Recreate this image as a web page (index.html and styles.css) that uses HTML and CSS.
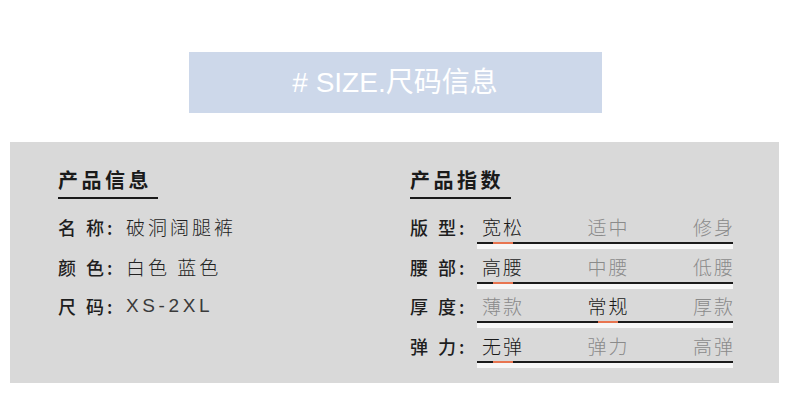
FILE: index.html
```html
<!DOCTYPE html>
<html lang="zh-CN">
<head>
<meta charset="utf-8">
<title>SIZE 尺码信息</title>
<link rel="stylesheet" href="styles.css">
</head>
<body>
<div class="page">
  <div class="banner"># SIZE.尺码信息</div>
  <div class="panel">
    <div class="col col-left">
      <div class="heading">产品信息</div>
      <div class="info-row"><span class="label">名 称:</span><span class="value">破洞阔腿裤</span></div>
      <div class="info-row"><span class="label">颜 色:</span><span class="value">白色 蓝色</span></div>
      <div class="info-row"><span class="label">尺 码:</span><span class="value latin">XS-2XL</span></div>
    </div>
    <div class="col col-right">
      <div class="heading heading-r">产品指数</div>
      <div class="idx-row">
        <span class="label label-r">版 型:</span>
        <div class="scale">
          <span class="opt on">宽松</span><span class="opt">适中</span><span class="opt">修身</span>
        </div>
      </div>
      <div class="idx-row">
        <span class="label label-r">腰 部:</span>
        <div class="scale">
          <span class="opt on">高腰</span><span class="opt">中腰</span><span class="opt">低腰</span>
        </div>
      </div>
      <div class="idx-row">
        <span class="label label-r">厚 度:</span>
        <div class="scale">
          <span class="opt">薄款</span><span class="opt on">常规</span><span class="opt">厚款</span>
        </div>
      </div>
      <div class="idx-row">
        <span class="label label-r">弹 力:</span>
        <div class="scale">
          <span class="opt on">无弹</span><span class="opt">弹力</span><span class="opt">高弹</span>
        </div>
      </div>
    </div>
  </div>
</div>
</body>
</html>
```

FILE: styles.css
```css
* { box-sizing: border-box; }
html, body { margin: 0; padding: 0; background: #ffffff; }
body {
  font-family: "Noto Sans CJK SC", "Liberation Sans", sans-serif;
  color: #222;
}
.page {
  width: 790px;
  height: 401px;
  padding-top: 52px;
  display: flex;
  flex-direction: column;
  align-items: center;
}
.banner {
  width: 413px;
  height: 61px;
  line-height: 61px;
  background: #cdd8ea;
  color: #ffffff;
  text-align: center;
  font-family: "Liberation Sans", "Noto Sans CJK SC", sans-serif;
  font-size: 28px;
  font-weight: 400;
}
.panel {
  margin-top: 29px;
  width: 769px;
  height: 241px;
  margin-left: -1px;
  background: #d9d9d9;
  display: flex;
  padding: 23px 0 0 48px;
}
.col-left { width: 352px; }
.col-right { flex: 1; }
.heading {
  width: 100px;
  height: 34px;
  line-height: 29px;
  font-size: 20px;
  font-weight: 700;
  letter-spacing: 3.5px;
  color: #1a1a1a;
  border-bottom: 2px solid #1a1a1a;
  margin-bottom: 13px;
}
.heading-r { width: 101px; }
.info-row {
  display: flex;
  height: 32px;
  line-height: 30px;
  margin-bottom: 7.7px;
  font-size: 18px;
}
.label {
  width: 68px;
  flex: none;
  font-weight: 500;
  color: #1e1e1e;
  letter-spacing: 3px;
  white-space: nowrap;
}
.label-r { width: 67px; }
.value {
  color: #222;
  font-size: 19px;
  font-weight: 300;
  letter-spacing: 3px;
}
.value.latin {
  font-family: "Liberation Sans", "Noto Sans", sans-serif;
  font-weight: 400;
  font-size: 19px;
  letter-spacing: 3.6px;
  color: #3a3a3a;
}
.idx-row {
  display: flex;
  height: 32px;
  margin-bottom: 7.7px;
  font-size: 18px;
  line-height: 30px;
}
.scale {
  width: 256px;
  height: 32px;
  padding-left: 5px;
  display: flex;
  justify-content: space-between;
  border-bottom: 2px solid #1a1a1a;
  box-shadow: 0 5px 0 0 #f6f6f6;
}
.opt {
  position: relative;
  color: #8a8a8a;
  font-size: 19px;
  font-weight: 300;
  letter-spacing: 2px;
  margin-right: -2px;
}
.opt.on { color: #1a1a1a; }
.opt.on::after {
  content: "";
  position: absolute;
  left: 50%;
  margin-left: -10px;
  bottom: -2px;
  width: 20px;
  height: 2px;
  background: #e87550;
}
```
